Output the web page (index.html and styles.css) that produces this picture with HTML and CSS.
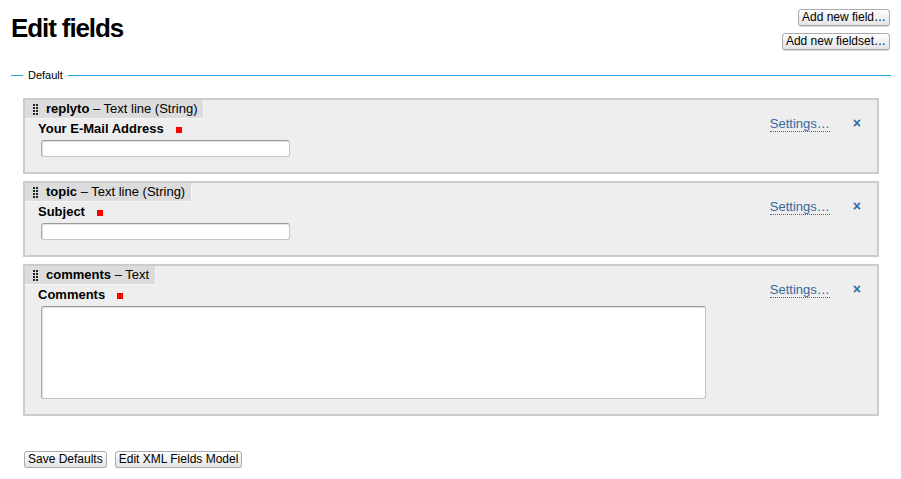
FILE: index.html
```html
<!DOCTYPE html>
<html>
<head>
<meta charset="utf-8">
<title>Edit fields</title>
<link rel="stylesheet" href="styles.css">
</head>
<body>
<div class="page">
  <div class="header">
    <h1 class="title">Edit fields</h1>
    <div class="header-actions">
      <button class="btn" type="button">Add new field…</button>
      <button class="btn" type="button">Add new fieldset…</button>
    </div>
  </div>

  <section class="group">
    <div class="group-head">
      <span class="group-line group-line-start"></span>
      <span class="group-legend">Default</span>
      <span class="group-line group-line-end"></span>
    </div>

    <div class="group-body">
      <div class="field">
        <div class="field-main">
          <div class="field-tab">
            <svg class="grip" width="5" height="11" viewBox="0 0 5 11"><g fill="#222"><rect x="0" y="0" width="2" height="2"/><rect x="3" y="0" width="2" height="2"/><rect x="0" y="3" width="2" height="2"/><rect x="3" y="3" width="2" height="2"/><rect x="0" y="6" width="2" height="2"/><rect x="3" y="6" width="2" height="2"/><rect x="0" y="9" width="2" height="2"/><rect x="3" y="9" width="2" height="2"/></g></svg>
            <span class="field-name">replyto</span><span class="field-type"> – Text line (String)</span>
          </div>
          <div class="field-label">Your E-Mail Address<span class="required"></span></div>
          <input class="field-input" type="text">
        </div>
        <div class="field-actions">
          <a class="settings" href="#">Settings…</a>
          <a class="remove" href="#">×</a>
        </div>
      </div>

      <div class="field">
        <div class="field-main">
          <div class="field-tab">
            <svg class="grip" width="5" height="11" viewBox="0 0 5 11"><g fill="#222"><rect x="0" y="0" width="2" height="2"/><rect x="3" y="0" width="2" height="2"/><rect x="0" y="3" width="2" height="2"/><rect x="3" y="3" width="2" height="2"/><rect x="0" y="6" width="2" height="2"/><rect x="3" y="6" width="2" height="2"/><rect x="0" y="9" width="2" height="2"/><rect x="3" y="9" width="2" height="2"/></g></svg>
            <span class="field-name">topic</span><span class="field-type"> – Text line (String)</span>
          </div>
          <div class="field-label">Subject<span class="required"></span></div>
          <input class="field-input" type="text">
        </div>
        <div class="field-actions">
          <a class="settings" href="#">Settings…</a>
          <a class="remove" href="#">×</a>
        </div>
      </div>

      <div class="field">
        <div class="field-main">
          <div class="field-tab">
            <svg class="grip" width="5" height="11" viewBox="0 0 5 11"><g fill="#222"><rect x="0" y="0" width="2" height="2"/><rect x="3" y="0" width="2" height="2"/><rect x="0" y="3" width="2" height="2"/><rect x="3" y="3" width="2" height="2"/><rect x="0" y="6" width="2" height="2"/><rect x="3" y="6" width="2" height="2"/><rect x="0" y="9" width="2" height="2"/><rect x="3" y="9" width="2" height="2"/></g></svg>
            <span class="field-name">comments</span><span class="field-type"> – Text</span>
          </div>
          <div class="field-label">Comments<span class="required"></span></div>
          <textarea class="field-textarea"></textarea>
        </div>
        <div class="field-actions">
          <a class="settings" href="#">Settings…</a>
          <a class="remove" href="#">×</a>
        </div>
      </div>
    </div>
  </section>

  <div class="footer-actions">
    <button class="btn" type="button">Save Defaults</button>
    <button class="btn" type="button">Edit XML Fields Model</button>
  </div>
</div>
</body>
</html>
```

FILE: styles.css
```css
html, body {
  margin: 0;
  padding: 0;
  background: #ffffff;
}

body {
  font-family: "Liberation Sans", Arial, sans-serif;
  color: #000;
}

.page {
  padding: 0 10px 0 11px;
}

.header {
  display: flex;
  justify-content: space-between;
  align-items: flex-start;
  padding-top: 9px;
}

.title {
  margin: 4px 0 0 0;
  font-size: 26px;
  line-height: 30px;
  font-weight: bold;
  letter-spacing: -1.1px;
}

.header-actions {
  display: flex;
  flex-direction: column;
  align-items: flex-end;
  gap: 7px;
  padding-right: 1px;
}

.btn {
  font-family: "Liberation Sans", Arial, sans-serif;
  font-size: 12px;
  line-height: 15px;
  height: 17px;
  padding: 0 3px;
  margin: 0;
  color: #000;
  background: linear-gradient(#fefefe, #e4e4e4);
  border: 1px solid #a9a9a9;
  border-radius: 3px;
  box-shadow: 0 1px 0 #d8d8d8;
}

.group {
  margin-top: 19px;
}

.group-head {
  display: grid;
  grid-template-columns: 12px auto 1fr;
  align-items: center;
  height: 13px;
}

.group-line {
  display: block;
  height: 1px;
  background-color: rgb(40, 160, 225);
}

.group-legend {
  padding: 0 5px;
  font-size: 11px;
  line-height: 13px;
  color: #000;
}

.group-body {
  padding: 16px 12px 0 12px;
}

.field {
  display: flex;
  background: #eeeeee;
  border: 2px solid #cccccc;
  margin-bottom: 7px;
}

.field-main {
  flex: 1;
  padding-bottom: 15px;
}

.field-tab {
  display: inline-flex;
  align-items: center;
  background: #dcdcdc;
  border-right: 1px solid #f6f6f6;
  border-bottom: 1px solid #f6f6f6;
  height: 18px;
  padding: 0 6px 0 8px;
  font-size: 13px;
  line-height: 18px;
}

.grip {
  display: block;
  margin-right: 8px;
}

.field-name {
  font-weight: bold;
}

.field-type {
  white-space: pre;
}

.field-label {
  margin: 2px 0 0 13px;
  font-size: 13px;
  line-height: 16px;
  font-weight: bold;
}

.required {
  display: inline-block;
  width: 6px;
  height: 6px;
  background: #ff0000;
  margin-left: 12px;
}

.field-input,
.field-textarea {
  display: block;
  box-sizing: border-box;
  margin: 3px 0 0 16px;
  padding: 0;
  background: #ffffff;
  border: 1px solid #c4c4c4;
  border-top-color: #9a9a9a;
  border-left-color: #a8a8a8;
  border-radius: 3px;
  box-shadow: inset 1px 1px 1px #e0e0e0;
  font-family: "Liberation Sans", Arial, sans-serif;
}

.field-input {
  width: 249px;
  height: 17px;
}

.field-textarea {
  width: 665px;
  height: 93px;
  resize: none;
}

.field-actions {
  display: flex;
  align-items: flex-start;
  gap: 23px;
  padding: 16px 16px 0 0;
}

.settings {
  font-size: 13px;
  line-height: 15px;
  color: #36699e;
  text-decoration: none;
  border-bottom: 1px dotted #36699e;
}

.remove {
  font-size: 14px;
  line-height: 15px;
  font-weight: bold;
  color: #2f6aa0;
  text-decoration: none;
}

.footer-actions {
  display: flex;
  gap: 8px;
  padding: 28px 0 0 13px;
}
```
